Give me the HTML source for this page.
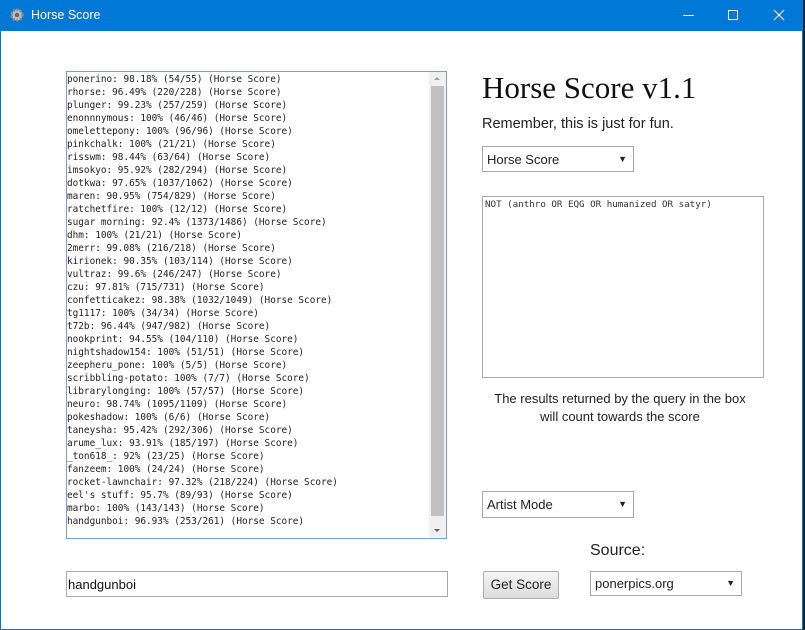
<!DOCTYPE html>
<html><head><meta charset="utf-8"><style>
*{box-sizing:border-box;margin:0;padding:0}
body{width:805px;height:630px;background:#1b2330;position:relative;overflow:hidden;font-family:"Liberation Sans",sans-serif}
#win{position:absolute;left:0;top:0;width:803px;height:630px;background:#fff;border:1px solid #0078d7;border-top:none}
#title{position:absolute;left:-1px;top:0;width:803px;height:31px;background:#0078d7;color:#fff;font-size:12px}
.abs{position:absolute}
#list{left:65px;top:71px;width:381px;height:468px;border:1px solid #7a9fdf;background:#fff}
#list pre{position:absolute;left:0px;top:1px;font-family:"DejaVu Sans Mono","Liberation Mono",monospace;font-size:9.4px;line-height:13px;color:#222}
#sb{position:absolute;right:0;top:0;width:17px;height:466px;background:#f0f0f0}
#thumb{position:absolute;left:2px;top:14px;width:13px;height:430px;background:#c1c1c1}
.sel{border:1px solid #a9a9a9;background:#fff;font-size:13px;color:#222;padding:5px 4px}
.sel span{position:absolute;right:6px;top:7px;font-size:9px}
</style></head><body>
<div id="win">
<div id="title">
<svg class="abs" style="left:9px;top:7px" width="16" height="16" viewBox="0 0 16 16"><circle cx="8" cy="8" r="5.5" fill="#bbb" stroke="#888" stroke-width="2.5" stroke-dasharray="2 1.6"/><circle cx="8" cy="8" r="2.2" fill="#666"/></svg>
<div class="abs" style="left:31px;top:8px;font-size:12.5px">Horse Score</div>
<div class="abs" style="left:683px;top:15px;width:11px;height:1px;background:#fff"></div>
<div class="abs" style="left:728px;top:10px;width:10px;height:10px;border:1px solid #fff"></div>
<svg class="abs" style="left:773px;top:9px" width="12" height="12"><path d="M1 1L11 11M11 1L1 11" stroke="#fff" stroke-width="1.2"/></svg>
</div>
<div id="list" class="abs"><pre>ponerino: 98.18% (54/55) (Horse Score)
rhorse: 96.49% (220/228) (Horse Score)
plunger: 99.23% (257/259) (Horse Score)
enonnnymous: 100% (46/46) (Horse Score)
omelettepony: 100% (96/96) (Horse Score)
pinkchalk: 100% (21/21) (Horse Score)
risswm: 98.44% (63/64) (Horse Score)
imsokyo: 95.92% (282/294) (Horse Score)
dotkwa: 97.65% (1037/1062) (Horse Score)
maren: 90.95% (754/829) (Horse Score)
ratchetfire: 100% (12/12) (Horse Score)
sugar morning: 92.4% (1373/1486) (Horse Score)
dhm: 100% (21/21) (Horse Score)
2merr: 99.08% (216/218) (Horse Score)
kirionek: 90.35% (103/114) (Horse Score)
vultraz: 99.6% (246/247) (Horse Score)
czu: 97.81% (715/731) (Horse Score)
confetticakez: 98.38% (1032/1049) (Horse Score)
tg1117: 100% (34/34) (Horse Score)
t72b: 96.44% (947/982) (Horse Score)
nookprint: 94.55% (104/110) (Horse Score)
nightshadow154: 100% (51/51) (Horse Score)
zeepheru_pone: 100% (5/5) (Horse Score)
scribbling-potato: 100% (7/7) (Horse Score)
librarylonging: 100% (57/57) (Horse Score)
neuro: 98.74% (1095/1109) (Horse Score)
pokeshadow: 100% (6/6) (Horse Score)
taneysha: 95.42% (292/306) (Horse Score)
arume_lux: 93.91% (185/197) (Horse Score)
_ton618_: 92% (23/25) (Horse Score)
fanzeem: 100% (24/24) (Horse Score)
rocket-lawnchair: 97.32% (218/224) (Horse Score)
eel's stuff: 95.7% (89/93) (Horse Score)
marbo: 100% (143/143) (Horse Score)
handgunboi: 96.93% (253/261) (Horse Score)</pre>
<div id="sb"><div class="abs" style="left:5px;top:5px;border:3.5px solid transparent;border-bottom:3.5px solid #a0a0a0;border-top:none"></div><div id="thumb"></div><div class="abs" style="left:5px;bottom:6px;border:3.5px solid transparent;border-top:3.5px solid #606060;border-bottom:none"></div></div>
</div>
<div class="abs" style="left:481px;top:70px;font-family:'Liberation Serif',serif;font-size:31px;color:#111">Horse Score v1.1</div>
<div class="abs" style="left:481px;top:116px;font-size:14.5px;color:#222">Remember, this is just for fun.</div>
<div class="abs sel" style="left:481px;top:146px;width:152px;height:26px">Horse Score<span>▼</span></div>
<div class="abs" style="left:481px;top:196px;width:282px;height:182px;border:1px solid #a9a9a9;font-family:'DejaVu Sans Mono',monospace;font-size:9.2px;padding:2px;color:#333">NOT (anthro OR EQG OR humanized OR satyr)</div>
<div class="abs" style="left:481px;top:390px;width:276px;text-align:center;font-size:13px;line-height:18px;color:#222">The results returned by the query in the box<br>will count towards the score</div>
<div class="abs sel" style="left:481px;top:491px;width:152px;height:27px">Artist Mode<span>▼</span></div>
<div class="abs" style="left:589px;top:542px;font-size:16px;color:#222">Source:</div>
<div class="abs" style="left:65px;top:571px;width:382px;height:26px;border:1px solid #a9a9a9;font-size:13px;padding:5px 1px;color:#111">handgunboi</div>
<div class="abs" style="left:482px;top:571px;width:76px;height:28px;border:1px solid #adadad;border-radius:2px;background:linear-gradient(#f6f6f6,#dcdcdc);font-size:13.5px;text-align:center;line-height:26px;color:#222">Get Score</div>
<div class="abs sel" style="left:589px;top:571px;width:152px;height:25px;padding-top:4px">ponerpics.org<span style="top:6px">▼</span></div>
</div>
</body></html>
